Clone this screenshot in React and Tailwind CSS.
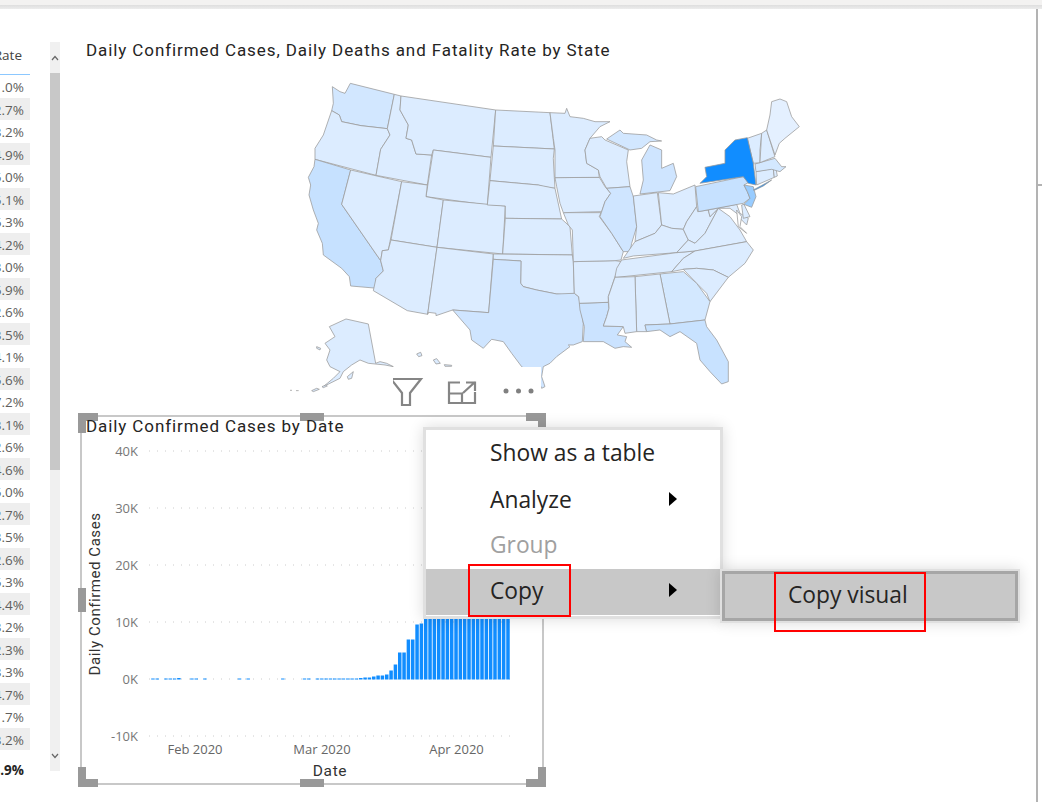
import React from 'react'

const rates = ['1.0', '2.7', '3.2', '4.9', '5.0', '5.1', '6.3', '4.2', '3.0', '6.9', '2.6', '3.5', '4.1', '5.6', '7.2', '3.1', '2.6', '4.6', '5.0', '2.7', '3.5', '2.6', '5.3', '4.4', '3.2', '2.3', '3.3', '4.7', '1.7', '3.2']

// bar heights in px, left to right
const bars = [
  1, 1, 0, 1, 1, 1, 1.5, 0, 0, 1, 1, 0, 1, 0, 0, 0, 0, 0, 0, 0, 1, 0, 1, 0, 0, 0, 0, 0, 0, 0, 1, 0, 0, 0, 0, 1, 1, 0,
  1, 1, 1, 1, 1, 1, 1, 1, 1, 1, 1.5, 2, 2, 3, 4, 4,
  5, 9, 15, 27, 27, 40, 40, 55, 56,
  130, 130, 130, 130, 130, 130, 130, 130, 130, 130, 130, 130, 130, 130, 130, 130, 130, 130, 130, 130,
]

const base = '#dcecff'
const west = [
  ['M181 40L313 73L292 176L240 170L213 167L155 155L148 135L125 122L130 100L127 50L150 65L165 70Z', '#d2e7ff'],
  ['M125 122L148 135L155 155L213 167L292 176L300 195L272 238L258 316L75 268L75 235L100 195Z', base],
  ['M75 268L182 300L155 403L272 572L280 603L258 625L262 655L182 648L178 620L155 595L100 555L97 520L80 480L85 460L70 420L57 375L62 345L55 322L72 290Z', '#c6e1ff'],
  ['M182 300L335 335L300 515L295 540L277 542L272 572L155 403Z', base],
  ['M313 73L333 78L330 120L355 165L348 205L365 210L378 252L425 255L412 345L258 316L272 238L300 195L292 176Z', base],
  ['M333 78L617 120L603 262L430 240L425 255L378 252L365 210L348 205L355 165L330 120Z', base],
  ['M430 240L603 262L592 405L408 380Z', base],
  ['M335 335L412 345L408 380L460 390L441 532L303 510Z', base],
  ['M460 390L646 408L638 552L441 532Z', base],
  ['M303 510L441 532L413 733L352 722L250 662L258 625L280 603L272 572L277 542L295 540Z', base],
  ['M441 532L610 552L596 728L488 720L438 737L438 730L415 727L413 733Z', base],
  ['M617 120L780 128L793 237L610 228Z', base],
  ['M610 228L793 237L790 265L793 322L795 355L760 350L745 345L600 332Z', base],
  ['M600 332L745 345L795 355L815 447L646 445L646 408L592 405Z', base],
  ['M646 445L815 447L840 470L847 555L638 552Z', base],
  ['M610 552L847 555L850 575L853 670L830 675L800 672L740 660L700 650L692 640L693 573L610 568Z', base],
  ['M610 568L693 573L692 640L700 650L740 660L800 672L853 670L866 680L870 700L880 760L877 815L850 825L835 825L840 830L800 860L780 880L760 890L755 920L765 950L755 955L740 920L695 890L665 850L640 815L605 808L580 835L545 810L540 780L488 720L596 728Z', '#cfe5ff'],
  // alaska and islands
  ['M168 747L235 762L257 880L270 875L290 880L310 890L285 885L235 880L210 870L185 885L160 905L150 925L110 945L100 950L130 925L150 905L120 890L110 870L120 840L105 820L135 800L118 770Z', base],
  ['M380 852L392 847L396 857L386 860Z', base],
  ['M430 870L440 866L451 880L438 882Z', base],
  ['M463 884L485 886L485 889L465 889Z', base],
  ['M80 830L92 835L90 840L80 835Z', base],
  ['M172 920L190 905L185 925L175 928Z', base],
  ['M65 962L80 955L88 958L70 965Z', base],
  ['M96 950L108 945L112 948L100 953Z', base],
  ['M0 961L6 961M18 962L26 962', 'none'],
]

const east = [
  ['M118 700L205 697L207 715L200 740L190 768L250 770L232 795L260 800L255 815L275 832L250 830L225 835L190 815L130 815L133 770L120 720Z', '#cbe3ff'],
  ['M100 575L225 572L245 575L225 620L205 680L205 697L118 700L116 680L103 670Z', base],
  ['M70 428L183 428L178 440L215 490L250 545L243 570L225 572L100 575L97 480L85 465Z', base],
  ['M45 323L178 322L195 350L212 370L195 395L185 425L70 428L60 400L50 350Z', base],
  ['M30 128L75 130L80 115L90 140L130 145L165 155L210 155L180 170L150 205L135 240L140 280L175 300L178 322L45 323L45 240L40 205Z', base],
  ['M150 205L185 200L195 210L265 240L260 275L270 350L200 355L180 320L175 300L140 280L135 240Z', base],
  ['M200 207L240 180L250 190L320 195L350 210L365 213L330 215L305 235L270 240Z', '#d2e7ff'],
  ['M305 270L330 225L365 240L365 295L400 280L410 320L390 362L300 372L310 330Z', '#cfe5ff'],
  ['M200 355L270 350L280 380L290 470L275 520L270 545L250 545L215 490L180 440L195 395L212 370Z', '#cfe5ff'],
  ['M280 378L352 368L365 465L345 490L285 515L290 470Z', base],
  ['M355 368L400 372L465 345L470 410L440 455L430 478L395 475L365 465Z', base],
  ['M250 565L285 515L345 490L365 465L395 475L430 478L445 510L410 548L280 558Z', base],
  ['M230 595L245 570L410 548L465 543L430 565L395 605L230 622L225 620Z', base],
  ['M430 478L440 455L470 410L473 425L505 420L510 440L535 415L495 490L465 520L445 510Z', base],
  ['M410 548L445 510L465 520L495 490L535 415L570 440L600 480L620 515L465 543Z', base],
  ['M465 543L620 515L640 540L615 580L565 622L520 600L470 595L430 598L395 605L430 565Z', base],
  ['M430 598L470 595L520 600L565 622L510 695L500 670L470 640Z', base],
  ['M360 612L430 605L470 640L510 695L495 750L390 762Z', '#d3e8ff'],
  ['M285 620L360 612L390 762L315 765L320 785L290 785Z', base],
  ['M225 622L285 620L290 785L255 790L250 770L190 768L200 740L207 715L205 680Z', base],
  ['M315 765L390 762L495 750L500 770L530 810L565 875L565 935L545 942L510 905L480 870L470 820L420 785L390 800L360 780L320 785Z', '#c8e2ff'],
  ['M505 420L590 403L600 430L625 445L620 465L605 450L590 430L570 415L535 415L510 440Z', base],
  ['M605 405L612 403L630 440L610 445Z', base],
  ['M590 420L605 440L600 470L620 490L595 470Z', '#ffffff'],
  ['M467 350L610 320L625 338L612 345L622 365L630 385L610 400L475 425Z', '#c6e1ff'],
  ['M612 345L640 350L648 380L635 412L612 403L630 385L622 365Z', '#98ccff'],
  ['M648 305L700 295L703 322L650 345Z', base],
  ['M700 297L708 295L712 318L703 322Z', base],
  ['M645 282L705 265L725 290L738 290L720 305L695 298L648 305Z', '#d3e8ff'],
  ['M622 205L665 190L660 240L660 278L640 280Z', base],
  ['M665 190L680 180L705 260L660 278Z', base],
  ['M680 180L690 135L695 95L720 87L740 95L755 140L778 170L735 205L718 220L705 255Z', '#e4f0ff'],
  ['M480 340L500 320L495 292L555 280L555 240L585 210L622 203L640 280L648 345L625 340L610 320Z', '#118dff'],
  ['M640 360L695 330L670 348L645 360Z', '#118dff'],
]

function UsaMap() {
  return (
    <svg width="530" height="330" viewBox="280 70 530 330" className="block ml-[201px] mt-[10px]">
      <g transform="translate(290 70) scale(0.3333)" stroke="#9a9a9a" strokeWidth="2.3" strokeLinejoin="round">
        {west.map(([d, fill], i) => <path key={i} d={d} fill={fill} />)}
      </g>
      <g transform="translate(540 70) scale(0.3333)" stroke="#9a9a9a" strokeWidth="2.3" strokeLinejoin="round">
        {east.map(([d, fill], i) => <path key={i} d={d} fill={fill} />)}
      </g>
    </svg>
  )
}

function VisualHeader() {
  return (
    <div className="absolute left-[314px] top-[358px] w-[148px] h-[48px] bg-white">
      <svg width="148" height="48" viewBox="393 367 148 48" fill="none" stroke="#858585" strokeWidth="2.2">
        <path d="M391 379H421L410 393V405H402V393Z" />
        <path d="M460 382.500H449V403H475V392M449 393.500H462V403M463 393L475 382M466 382.500H475V391" />
        <g fill="#808080" stroke="none">
          <circle cx="506" cy="391" r="2.500" />
          <circle cx="518.500" cy="391" r="2.500" />
          <circle cx="531" cy="391" r="2.500" />
        </g>
      </svg>
    </div>
  )
}

function Chart() {
  const axis = { fontFamily: 'Open Sans, sans-serif' }
  const din = { fontFamily: 'Roboto, sans-serif' }
  return (
    <svg width="460" height="366" viewBox="82 417 460 366" className="block">
      {[['40K', 451], ['30K', 508], ['20K', 565], ['10K', 622], ['0K', 679], ['-10K', 736]].map(([label, y]) => (
        <g key={label}>
          <line x1="149" x2="510" y1={y} y2={y} stroke="#cccccc" strokeWidth="1" strokeDasharray="1 7" />
          <text x="138" y={y + 5} textAnchor="end" fontSize="13" fill="#777777" style={axis}>{label}</text>
        </g>
      ))}
      {bars.map((h, i) => h > 0 && (
        <rect key={i} x={385 + (i - 54) * 4.33} y={679.500 - h} width="3.500" height={h} fill="#118dff" />
      ))}
      {[['Feb 2020', 195], ['Mar 2020', 322], ['Apr 2020', 456.500]].map(([label, x]) => (
        <text key={label} x={x} y="754" textAnchor="middle" fontSize="13" fill="#666666" style={axis}>{label}</text>
      ))}
      <text x="330" y="776" textAnchor="middle" fontSize="15.500" letterSpacing="0.6" fill="#333333" style={din}>Date</text>
      <text transform="translate(100 594) rotate(-90)" textAnchor="middle" fontSize="15" letterSpacing="0.55" fill="#333333" style={din}>Daily Confirmed Cases</text>
    </svg>
  )
}

function Corner({ d }) {
  return (
    <svg width="20" height="20" viewBox="0 0 20 20" className="block shrink-0"><path d={d} fill="#999999" /></svg>
  )
}

// sizing handles round the selected visual
function Handles() {
  return (
    <div className="absolute -inset-[4px] flex flex-col justify-between">
      <div className="flex justify-between items-start">
        <Corner d="M0 0H20V8H8V20H0Z" />
        <span className="w-[24px] h-[8px] bg-[#999999]" />
        <Corner d="M0 0H20V20H12V8H0Z" />
      </div>
      <span className="w-[8px] h-[24px] bg-[#999999]" />
      <div className="flex justify-between items-end">
        <Corner d="M0 0H8V12H20V20H0Z" />
        <span className="w-[24px] h-[8px] bg-[#999999]" />
        <Corner d="M12 0H20V20H0V12H12Z" />
      </div>
    </div>
  )
}

function Triangle() {
  return <span className="w-0 h-0 border-y-[7px] border-y-transparent border-l-[8px] border-l-black -translate-y-[1px]" />
}

function ContextMenu() {
  return (
    <div className="absolute left-[423px] top-[427px] w-[300px] h-[192px] bg-white border-[3px] border-[#e0e0e0] shadow-[0_0_14px_rgba(0,0,0,0.14)] text-[22.8px] leading-[46px] text-[#252423] font-['Open_Sans',sans-serif]">
      <div className="h-[46px] pl-[64px]">Show as a table</div>
      <div className="h-[46px] pl-[64px] pr-[43px] pt-[1px] flex items-center justify-between">
        <span>Analyze</span>
        <Triangle />
      </div>
      <div className="h-[46px] pl-[64px] text-[#a0a0a0]">Group</div>
      <div className="h-[46px] mt-[1px] pl-[64px] pr-[43px] pb-[2px] flex items-center justify-between bg-[#c8c8c8]">
        <span>Copy</span>
        <Triangle />
      </div>
    </div>
  )
}

function SubMenu() {
  return (
    <div className="absolute left-[720px] top-[569px] w-[300px] h-[54px] border-2 border-[#e0e0e0] shadow-[0_0_14px_rgba(0,0,0,0.14)]">
      <div className="h-full border-[3px] border-[#a6a6a6] bg-[#c8c8c8] pl-[63px] text-[22.8px] leading-[42px] text-[#252423] font-['Open_Sans',sans-serif]">
        Copy visual
      </div>
    </div>
  )
}

export default function App() {
  return (
    <div className="relative w-[1042px] h-[802px] overflow-hidden bg-white flex flex-col">
      <div className="h-[5px] bg-[#f3f2f1]" />
      <div className="h-[4px] bg-gradient-to-b from-[#dedede] to-[#ececec]" />
      <div className="flex flex-1 min-h-0">
        {/* table and its scrollbar */}
        <div className="w-[79px] flex shrink-0">
          <div className="w-[30px] pt-[34px] overflow-hidden text-[13.5px] text-[#605e5c] font-['Open_Sans',sans-serif] leading-[25px]">
            <div className="h-[32px] pr-[8px] border-b border-[#8cc8ff] text-[#444444] whitespace-nowrap flex justify-end">Rate</div>
            {rates.map((r, i) => (
              <div key={i} className={`h-[22.5px] pr-[6px] flex justify-end ${i % 2 ? 'bg-[#eeeeee]' : ''}`}>{r}%</div>
            ))}
            <div className="h-[8px] pr-[6px] overflow-hidden flex justify-end">3.0%</div>
            <div className="h-[23px] pr-[6px] font-bold text-[#252423] flex justify-end">3.9%</div>
          </div>
          <div className="ml-[20px] mt-[33px] w-[10px] h-[729px] bg-[#f0f0f0] flex flex-col">
            <div className="h-[31px] flex items-center justify-center">
              <svg width="8" height="6" viewBox="0 0 8 6" fill="none" stroke="#666666" strokeWidth="1.200"><path d="M1 5L4 1.500L7 5" /></svg>
            </div>
            <div className="h-[397px] bg-[#c8c8c8]" />
            <div className="flex-1 flex items-end justify-center pb-[12px]">
              <svg width="8" height="6" viewBox="0 0 8 6" fill="none" stroke="#666666" strokeWidth="1.200"><path d="M1 1L4 4.500L7 1" /></svg>
            </div>
          </div>
        </div>

        {/* report canvas */}
        <div className="flex-1 min-w-0 relative">
          <div className="pt-[31px] pl-[7px] h-[51px] text-[17px] leading-[20px] text-[#252423] tracking-[0.9px] whitespace-nowrap font-['Roboto',sans-serif]">
            Daily Confirmed Cases, Daily Deaths and Fatality Rate by State
          </div>
          <UsaMap />
          <VisualHeader />
          <div className="relative mt-[15px] ml-[1px] w-[464px] h-[370px] border-2 border-[#c8c8c8]">
            <Handles />
            <div className="absolute left-[4px] -top-[1px] text-[17px] leading-[20px] text-[#252423] tracking-[0.9px] whitespace-nowrap font-['Roboto',sans-serif]">
              Daily Confirmed Cases by Date
            </div>
            <Chart />
          </div>
        </div>

        <div className="w-[6px] shrink-0 border-l-2 border-[#b3b3b3] pt-[175px]">
          <div className="h-[2px] bg-[#b3b3b3]" />
        </div>
      </div>

      <ContextMenu />
      <SubMenu />
      {/* red annotation boxes */}
      <div className="absolute left-[468px] top-[564px] w-[103px] h-[53px] border-2 border-[#ff0000]" />
      <div className="absolute left-[774px] top-[572px] w-[152px] h-[60px] border-2 border-[#ff0000]" />
    </div>
  )
}
